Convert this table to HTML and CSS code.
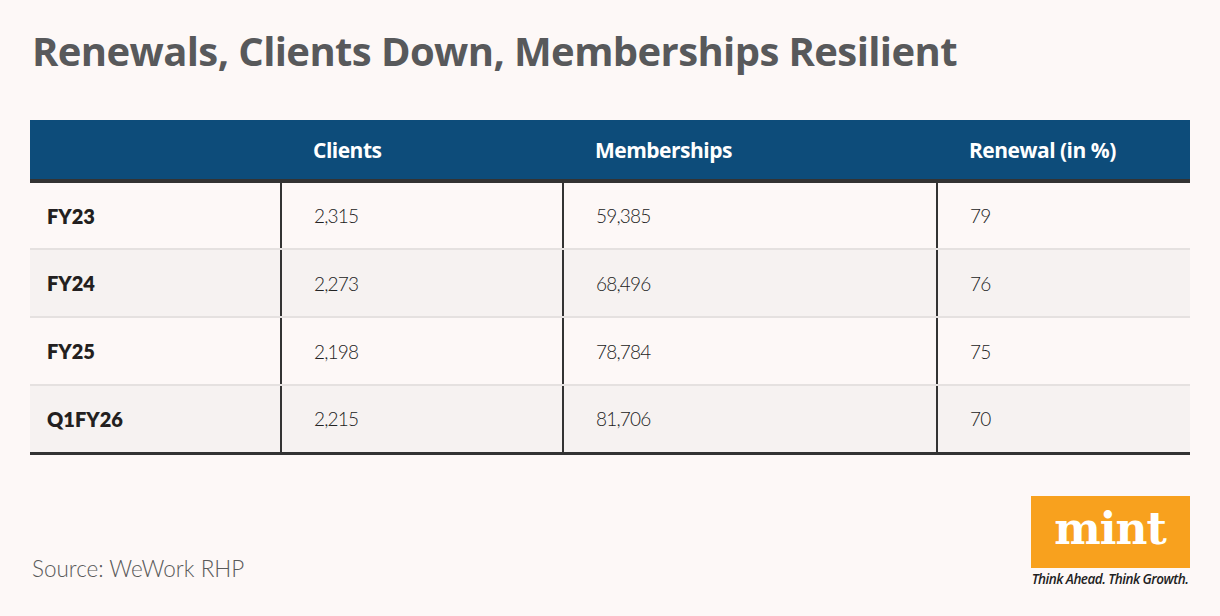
FILE: index.html
```html
<!DOCTYPE html>
<html lang="en">
<head>
<meta charset="utf-8">
<title>Renewals, Clients Down, Memberships Resilient</title>
<link rel="stylesheet" href="styles.css">
</head>
<body>
<main class="page">
  <h1 class="title">Renewals, Clients Down, Memberships Resilient</h1>
  <table class="data">
    <thead>
      <tr>
        <th class="c1"></th>
        <th class="c2">Clients</th>
        <th class="c3">Memberships</th>
        <th class="c4">Renewal (in %)</th>
      </tr>
    </thead>
    <tbody>
      <tr><td class="c1">FY23</td><td class="c2">2,315</td><td class="c3">59,385</td><td class="c4">79</td></tr>
      <tr class="alt"><td class="c1">FY24</td><td class="c2">2,273</td><td class="c3">68,496</td><td class="c4">76</td></tr>
      <tr><td class="c1">FY25</td><td class="c2">2,198</td><td class="c3">78,784</td><td class="c4">75</td></tr>
      <tr class="alt last"><td class="c1">Q1FY26</td><td class="c2">2,215</td><td class="c3">81,706</td><td class="c4">70</td></tr>
    </tbody>
  </table>
  <footer class="foot">
    <p class="source">Source: WeWork RHP</p>
    <div class="brand">
      <div class="logo-box"><span class="logo-text">mint</span></div>
      <div class="tagline">Think Ahead. Think Growth.</div>
    </div>
  </footer>
</main>
</body>
</html>
```
FILE: styles.css
```css
* { box-sizing: border-box; }
html, body {
  margin: 0;
  padding: 0;
  background: #fdf8f7;
}
.page {
  width: 1220px;
  height: 616px;
  padding: 0 30px;
  font-family: "Open Sans", "Lato", sans-serif;
  color: #222;
}
.title {
  margin: 0;
  padding: 23px 0 0 2px;
  height: 120px;
  font-family: "Open Sans", sans-serif;
  font-weight: 700;
  font-size: 40px;
  line-height: 56px;
  color: #58595b;
  letter-spacing: -0.6px;
  white-space: nowrap;
}
.data {
  width: 1160px;
  border-collapse: collapse;
  table-layout: fixed;
}
.data .c1 { width: 251px; }
.data .c2 { width: 282px; }
.data .c3 { width: 374px; }
.data .c4 { width: 253px; }
.data th, .data td { text-align: left; padding: 0 0 0 32px; }
.data th.c1, .data td.c1 { padding-left: 17px; }
.data thead th {
  background: #0d4c7a;
  color: #fff;
  height: 61px;
  font-family: "Open Sans", sans-serif;
  font-weight: 700;
  font-size: 21px;
  letter-spacing: -0.5px;
  border-bottom: 4px solid #333;
}
.data td {
  height: 68px;
  font-family: "Lato", sans-serif;
  font-weight: 300;
  font-size: 19px;
  letter-spacing: -0.8px;
  color: #222;
  border-bottom: 2px solid #e5e1e0;
}
.data td.c1 {
  font-weight: 800;
  font-size: 20px;
  letter-spacing: 0;
  color: #231f20;
}
.data td + td { border-left: 2px solid #333; }
.data tr.alt td { background: #f6f2f1; }
.data tr.last td { border-bottom: 3px solid #333; }
.foot {
  display: flex;
  justify-content: space-between;
  align-items: flex-start;
  margin-top: 41px;
}
.source {
  margin: 59px 0 0 2px;
  font-family: "Lato", sans-serif;
  font-weight: 300;
  font-size: 22.5px;
  line-height: 28px;
  color: #5a5a5a;
}
.brand {
  width: 160px;
  display: flex;
  flex-direction: column;
  align-items: center;
}
.logo-box {
  width: 159px;
  height: 72px;
  background: #f8a11e;
  display: flex;
  align-items: center;
  justify-content: center;
}
.logo-text {
  font-family: "DejaVu Serif", serif;
  font-weight: 700;
  font-size: 44px;
  color: #fff;
  line-height: 1;
  letter-spacing: -1px;
  margin-top: -6px;
}
.tagline {
  margin-top: 2px;
  font-family: "Open Sans", sans-serif;
  font-style: italic;
  font-weight: 600;
  font-size: 13.5px;
  letter-spacing: -0.5px;
  color: #222;
  white-space: nowrap;
}
```
